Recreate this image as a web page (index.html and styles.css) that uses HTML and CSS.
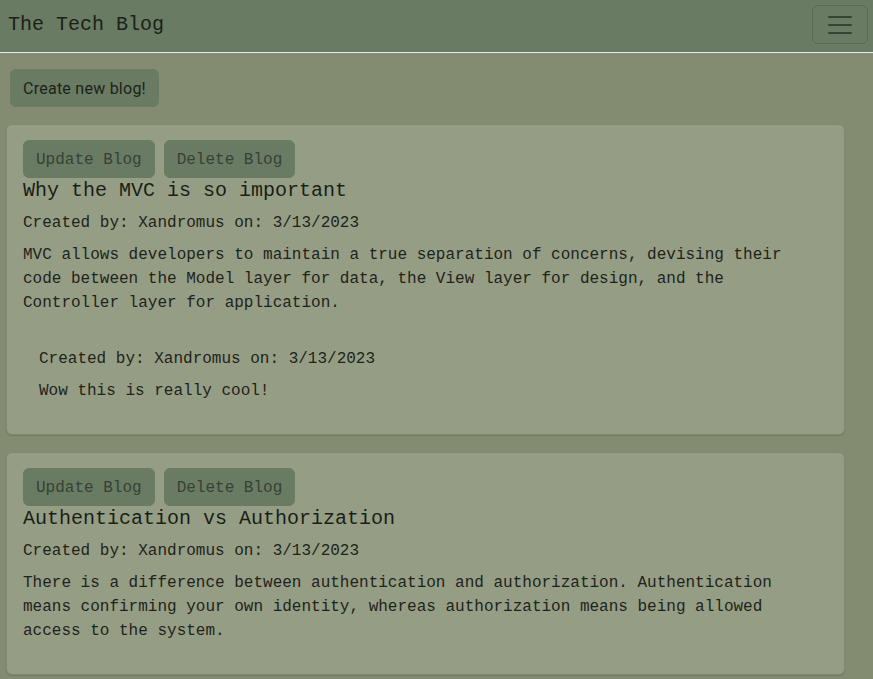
FILE: index.html
```html
<!DOCTYPE html>
<html lang="en">
<head>
<meta charset="utf-8">
<title>The Tech Blog</title>
<link rel="stylesheet" href="styles.css">
</head>
<body>
<nav class="navbar">
  <span class="brand">The Tech Blog</span>
  <button class="toggler" aria-label="Toggle navigation">
    <svg width="30" height="30" viewBox="0 0 30 30"><path d="M4 7h22M4 15h22M4 23h22" stroke="#2f3a2d" stroke-width="2" stroke-linecap="round" opacity="0.85"/></svg>
  </button>
</nav>
<main class="main">
  <div class="create-row"><button class="btn-create">Create new blog!</button></div>

  <section class="card">
    <div class="actions">
      <button class="btn">Update Blog</button>
      <button class="btn">Delete Blog</button>
    </div>
    <h5 class="title">Why the MVC is so important</h5>
    <p class="meta">Created by: Xandromus on: 3/13/2023</p>
    <p class="content">MVC allows developers to maintain a true separation of concerns, devising their code between the Model layer for data, the View layer for design, and the Controller layer for application.</p>
    <div class="comment">
      <p class="meta">Created by: Xandromus on: 3/13/2023</p>
      <p class="comment-text">Wow this is really cool!</p>
    </div>
  </section>

  <section class="card">
    <div class="actions">
      <button class="btn">Update Blog</button>
      <button class="btn">Delete Blog</button>
    </div>
    <h5 class="title">Authentication vs Authorization</h5>
    <p class="meta">Created by: Xandromus on: 3/13/2023</p>
    <p class="content">There is a difference between authentication and authorization. Authentication means confirming your own identity, whereas authorization means being allowed access to the system.</p>
  </section>
</main>
</body>
</html>
```
FILE: styles.css
```css
* { box-sizing: border-box; }
html, body { margin: 0; padding: 0; }
body {
  background: #838b70;
  font-family: "Liberation Mono", "Courier New", monospace;
  color: #1f231c;
  font-size: 16px;
  line-height: 1.5;
  min-height: 679px;
}
.navbar {
  height: 53px;
  background: #6a7b63;
  border-bottom: 1px solid #e6ece6;
  display: flex;
  align-items: center;
  justify-content: space-between;
  padding: 0 6px 0 8px;
}
.brand {
  font-size: 20px;
  line-height: 30px;
  color: #1c2019;
  margin-top: -2px;
}
.toggler {
  width: 56px;
  height: 39px;
  padding: 0;
  background: transparent;
  border: 1px solid rgba(40, 50, 38, 0.25);
  border-radius: 6px;
  display: flex;
  align-items: center;
  justify-content: center;
  margin-top: -3px;
  margin-right: -1px;
}
.main {
  padding: 16px 28px 0 6px;
}
.create-row {
  padding-left: 4px;
  margin-bottom: 17px;
}
.btn-create {
  font-family: Roboto, "Noto Sans", sans-serif;
  font-size: 16px;
  letter-spacing: 0.25px;
  line-height: 24px;
  padding: 7px 10px 5px;
  height: 38px;
  width: 149px;
  color: #1d2219;
  background: #6a7b63;
  border: 1px solid #6a7b63;
  border-radius: 6px;
}
.card {
  background: #959e84;
  border: 1px solid #7f8a70;
  border-radius: 6px;
  padding: 15px 16px 15px;
  margin-bottom: 17px;
  box-shadow: 0 1px 1px rgba(60, 70, 50, 0.25);
}
.actions {
  display: flex;
  gap: 9px;
}
.btn {
  font-family: "Liberation Mono", "Courier New", monospace;
  font-size: 16px;
  line-height: 24px;
  padding: 7px 12px 5px;
  height: 38px;
  color: #374234;
  background: #6a7b63;
  border: 1px solid #6a7b63;
  border-radius: 6px;
}
.title {
  font-size: 20px;
  font-weight: normal;
  line-height: 24px;
  margin: 1px 0 8px;
  color: #1a1e17;
}
.meta {
  margin: 0 0 8px;
  line-height: 24px;
}
.content {
  margin: 0 0 16px;
  line-height: 24px;
}
.comment {
  padding: 16px;
}
.comment-text {
  margin: 0;
}
```
